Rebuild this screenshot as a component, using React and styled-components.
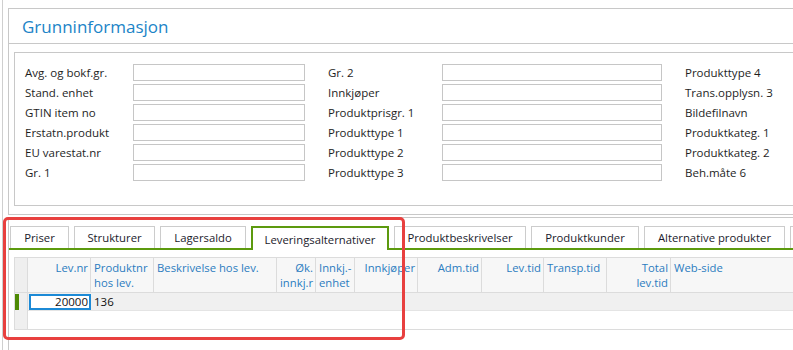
import React from "react";
import styled, { createGlobalStyle } from "styled-components";

const GlobalStyle = createGlobalStyle`
  html, body {
    margin: 0;
    background: #fff;
  }
  body {
    font-family: "Open Sans", "Liberation Sans", sans-serif;
    font-size: 12px;
    color: #222;
  }
`;

const leftFields = ["Avg. og bokf.gr.", "Stand. enhet", "GTIN item no", "Erstatn.produkt", "EU varestat.nr", "Gr. 1"];
const midFields = ["Gr. 2", "Innkjøper", "Produktprisgr. 1", "Produkttype 1", "Produkttype 2", "Produkttype 3"];
const rightFields = ["Produkttype 4", "Trans.opplysn. 3", "Bildefilnavn", "Produktkateg. 1", "Produktkateg. 2", "Beh.måte 6"];

const tabs = [
  { name: "Priser", width: 59 },
  { name: "Strukturer", width: 81 },
  { name: "Lagersaldo", width: 86 },
  { name: "Leveringsalternativer", width: 138 },
  { name: "Produktbeskrivelser", width: 132 },
  { name: "Produktkunder", width: 108 },
  { name: "Alternative produkter", width: 141 },
  { name: "Dokumenter", width: 100 },
];

const columns = [
  { label: ["Lev.nr"], width: 63, align: "right" },
  { label: ["Produktnr", "hos lev."], width: 63 },
  { label: ["Beskrivelse hos lev."], width: 123 },
  { label: ["Øk.", "innkj.r"], width: 39, align: "right" },
  { label: ["Innkj.-", "enhet"], width: 39 },
  { label: ["Innkjøper"], width: 63, align: "right" },
  { label: ["Adm.tid"], width: 64, align: "right" },
  { label: ["Lev.tid"], width: 62, align: "right" },
  { label: ["Transp.tid"], width: 63 },
  { label: ["Total", "lev.tid"], width: 64, align: "right" },
  { label: ["Web-side"], width: 200 },
];

const gridTemplate = `13px ${columns.map((c) => c.width + "px").join(" ")}`;

function App() {
  return (
    <>
      <GlobalStyle />
      <Page>
        <Frame>
          <Panel>
            <PanelHeader>Grunninformasjon</PanelHeader>
            <PanelBody>
              <FieldBox>
                <FieldColumn $label={108} $input={172}>
                  {leftFields.map((f) => (
                    <React.Fragment key={f}>
                      <Label>{f}</Label>
                      <Input />
                    </React.Fragment>
                  ))}
                </FieldColumn>
                <FieldColumn $label={114} $input={220}>
                  {midFields.map((f) => (
                    <React.Fragment key={f}>
                      <Label>{f}</Label>
                      <Input />
                    </React.Fragment>
                  ))}
                </FieldColumn>
                <FieldColumn $label={110} $input={172}>
                  {rightFields.map((f) => (
                    <React.Fragment key={f}>
                      <Label>{f}</Label>
                      <Input />
                    </React.Fragment>
                  ))}
                </FieldColumn>
              </FieldBox>
            </PanelBody>
          </Panel>

          <TabPanel>
            <TabBar>
              {tabs.map((t) => (
                <Tab key={t.name} $width={t.width} $active={t.name === "Leveringsalternativer"}>
                  {t.name}
                </Tab>
              ))}
            </TabBar>
            <GridArea>
              <DataGrid>
                <HeaderRow>
                  <RowHead />
                  {columns.map((c, i) => (
                    <HeadCell key={i} $align={c.align}>
                      {c.label.map((l) => (
                        <div key={l}>{l}</div>
                      ))}
                    </HeadCell>
                  ))}
                </HeaderRow>
                <DataRow>
                  <RowHead>
                    <RowMarker />
                  </RowHead>
                  <ActiveCell>20000</ActiveCell>
                  <Cell>136</Cell>
                </DataRow>
                <EmptyRow>
                  <RowHead />
                </EmptyRow>
              </DataGrid>
            </GridArea>
          </TabPanel>
        </Frame>
        <Highlight />
      </Page>
    </>
  );
}

export default App;

const Page = styled.div`
  position: relative;
  width: 793px;
  height: 350px;
  overflow: hidden;
  padding-left: 2px;
  box-sizing: border-box;
`;

const Frame = styled.div`
  border-left: 1px solid #cfcfcf;
  padding: 8px 0 0 5px;
  height: 100%;
  box-sizing: border-box;
  width: 1100px;
`;

const Panel = styled.section`
  border: 1px solid #c8c8c8;
  background: #fff;
`;

const PanelHeader = styled.div`
  height: 34px;
  display: flex;
  align-items: center;
  padding-left: 13px;
  border-bottom: 1px solid #c8c8c8;
  font-size: 17px;
  color: #1b84c7;
`;

const PanelBody = styled.div`
  padding: 8px 8px 8px 5px;
`;

const FieldBox = styled.div`
  border: 1px solid #c8c8c8;
  display: flex;
  column-gap: 23px;
  padding: 11px 0 24px 10px;
`;

const FieldColumn = styled.div`
  display: grid;
  grid-template-columns: ${(p) => p.$label}px ${(p) => p.$input}px;
  grid-auto-rows: 17px;
  row-gap: 3px;
  align-items: center;
`;

const Label = styled.div`
  font-size: 11.5px;
  color: #1e1e1e;
  white-space: nowrap;
`;

const Input = styled.div`
  height: 17px;
  box-sizing: border-box;
  border: 1px solid #c6c6c6;
  background: #fff;
`;

const TabPanel = styled.div`
  margin-top: 2px;
  border: 1px solid #c8c8c8;
  padding-top: 8px;
  height: 200px;
`;

const TabBar = styled.div`
  display: flex;
  column-gap: 5px;
  padding-left: 1px;
  border-bottom: 2px solid #5c9a0e;
  height: 22px;
`;

const Tab = styled.div`
  flex: 0 0 ${(p) => p.$width}px;
  height: ${(p) => (p.$active ? "24px" : "22px")};
  box-sizing: border-box;
  display: flex;
  align-items: center;
  justify-content: center;
  border: ${(p) => (p.$active ? "2px solid #5c9a0e" : "1px solid #cccccc")};
  border-bottom: none;
  background: #fff;
  color: #1a1a2b;
  font-size: 11.3px;
  white-space: nowrap;
  overflow: hidden;
`;

const GridArea = styled.div`
  padding: 7px 0 0 5px;
`;

const DataGrid = styled.div`
  border-top: 1px solid #dcdcdc;
  border-left: 1px solid #dcdcdc;
  border-bottom: 1px solid #dcdcdc;
`;

const HeaderRow = styled.div`
  display: grid;
  grid-template-columns: ${gridTemplate};
  height: 35px;
  background: #f7f7f7;
  border-bottom: 1px solid #dcdcdc;
  box-sizing: border-box;
`;

const RowHead = styled.div`
  background: #efefef;
  border-right: 1px solid #dcdcdc;
  display: flex;
  align-items: stretch;
  padding: 1px 0;
  box-sizing: border-box;
`;

const HeadCell = styled.div`
  border-right: 1px solid #dcdcdc;
  padding: 2px 2px 0 3px;
  font-size: 11.3px;
  line-height: 15px;
  color: #2b7cc0;
  text-align: ${(p) => p.$align || "left"};
  white-space: nowrap;
  overflow: hidden;
`;

const DataRow = styled.div`
  display: grid;
  grid-template-columns: 13px 63px 63px;
  height: 18px;
  background: #f0f0f0;
  border-bottom: 1px solid #e4e4e4;
  box-sizing: border-box;
`;

const RowMarker = styled.div`
  width: 4px;
  background: #4e8a04;
`;

const ActiveCell = styled.div`
  margin: 1px 0 0 1px;
  height: 16px;
  box-sizing: border-box;
  border: 2px solid #1c8ad6;
  background: #fff;
  text-align: right;
  padding-right: 1px;
  line-height: 12px;
  font-size: 11.5px;
  color: #111;
`;

const Cell = styled.div`
  padding-left: 3px;
  line-height: 18px;
  font-size: 11.5px;
  color: #111;
`;

const EmptyRow = styled.div`
  display: grid;
  grid-template-columns: 13px;
  height: 18px;
  background: #fff;
`;

const Highlight = styled.div`
  position: absolute;
  left: 3px;
  top: 217px;
  width: 402px;
  height: 123px;
  box-sizing: border-box;
  border: 3px solid #e8403f;
  border-radius: 5px;
  pointer-events: none;
`;
